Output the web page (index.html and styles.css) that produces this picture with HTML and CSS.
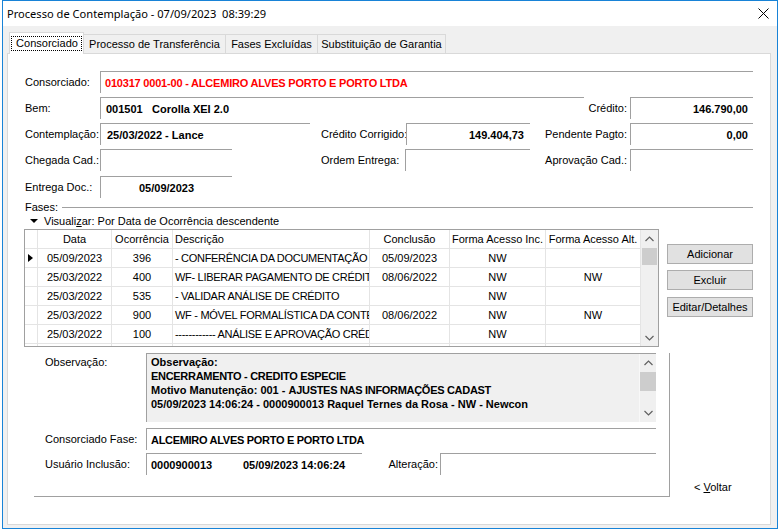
FILE: index.html
```html
<!DOCTYPE html>
<html lang="pt">
<head>
<meta charset="utf-8">
<title>Processo de Contemplação</title>
<link rel="stylesheet" href="styles.css">
</head>
<body>
<div class="window">
  <div class="titlebar">
    <span class="title">Processo de Contemplação - 07/09/2023&nbsp;&nbsp;08:39:29</span>
    <svg class="close" width="11" height="11" viewBox="0 0 11 11"><path d="M0.5 0.5 L10.5 10.5 M10.5 0.5 L0.5 10.5" stroke="#000" stroke-width="1" fill="none"/></svg>
  </div>
  <div class="client">
    <div class="tabs">
      <div class="tab active"><span class="focus">Consorciado</span></div>
      <div class="tab t2">Processo de Transferência</div>
      <div class="tab t3">Fases Excluídas</div>
      <div class="tab t4">Substituição de Garantia</div>
    </div>
    <div class="panel">
      <div class="row">
        <div class="lbl w75">Consorciado:</div>
        <div class="field red" style="width:653px">010317 0001-00 - ALCEMIRO ALVES PORTO E PORTO LTDA</div>
      </div>
      <div class="row">
        <div class="lbl w75">Bem:</div>
        <div class="field pl5" style="width:484px"><span class="code">001501</span><span>Corolla XEI 2.0</span></div>
        <div class="lbl rlbl" style="width:46px">Crédito:</div>
        <div class="field right" style="width:123px">146.790,00</div>
      </div>
      <div class="row">
        <div class="lbl w75">Contemplação:</div>
        <div class="field pl6" style="width:210px">25/03/2022 - Lance</div>
        <div class="lbl" style="width:85px;margin-left:11px">Crédito Corrigido:</div>
        <div class="field right pr7" style="width:124px">149.404,73</div>
        <div class="lbl rlbl" style="width:100px">Pendente Pagto:</div>
        <div class="field right" style="width:123px">0,00</div>
      </div>
      <div class="row tall">
        <div class="lbl w75">Chegada Cad.:</div>
        <div class="field" style="width:132px"></div>
        <div class="lbl" style="width:84px;margin-left:89px">Ordem Entrega:</div>
        <div class="field" style="width:125px"></div>
        <div class="lbl rlbl" style="width:100px">Aprovação Cad.:</div>
        <div class="field" style="width:123px"></div>
      </div>
      <div class="row last">
        <div class="lbl w75">Entrega Doc.:</div>
        <div class="field center" style="width:132px">05/09/2023</div>
      </div>

      <div class="fases"><span>Fases:</span><div class="fline"></div></div>
      <div class="visual"><span class="tri-down"></span><span>Visuali<u>z</u>ar: Por Data de Ocorrência descendente</span></div>

      <div class="gridrow">
        <div class="grid">
          <div class="gtable">
            <div class="grow head">
              <div class="gc c0"></div>
              <div class="gc c1">Data</div>
              <div class="gc c2">Ocorrência</div>
              <div class="gc c3 left">Descrição</div>
              <div class="gc c4">Conclusão</div>
              <div class="gc c5">Forma Acesso Inc.</div>
              <div class="gc c6">Forma Acesso Alt.</div>
            </div>
            <div class="grow">
              <div class="gc c0"><span class="tri-right"></span></div>
              <div class="gc c1">05/09/2023</div>
              <div class="gc c2">396</div>
              <div class="gc c3 left caps">- CONFERÊNCIA DA DOCUMENTAÇÃO</div>
              <div class="gc c4">05/09/2023</div>
              <div class="gc c5">NW</div>
              <div class="gc c6"></div>
            </div>
            <div class="grow">
              <div class="gc c0"></div>
              <div class="gc c1">25/03/2022</div>
              <div class="gc c2">400</div>
              <div class="gc c3 left caps">WF- LIBERAR PAGAMENTO DE CRÉDITO</div>
              <div class="gc c4">08/06/2022</div>
              <div class="gc c5">NW</div>
              <div class="gc c6">NW</div>
            </div>
            <div class="grow">
              <div class="gc c0"></div>
              <div class="gc c1">25/03/2022</div>
              <div class="gc c2">535</div>
              <div class="gc c3 left caps">- VALIDAR ANÁLISE DE CRÉDITO</div>
              <div class="gc c4"></div>
              <div class="gc c5">NW</div>
              <div class="gc c6"></div>
            </div>
            <div class="grow">
              <div class="gc c0"></div>
              <div class="gc c1">25/03/2022</div>
              <div class="gc c2">900</div>
              <div class="gc c3 left caps">WF - MÓVEL FORMALÍSTICA DA CONTEMPLAÇÃO</div>
              <div class="gc c4">08/06/2022</div>
              <div class="gc c5">NW</div>
              <div class="gc c6">NW</div>
            </div>
            <div class="grow">
              <div class="gc c0"></div>
              <div class="gc c1">25/03/2022</div>
              <div class="gc c2">100</div>
              <div class="gc c3 left caps">------------ ANÁLISE E APROVAÇÃO CRÉDITO</div>
              <div class="gc c4"></div>
              <div class="gc c5">NW</div>
              <div class="gc c6"></div>
            </div>
            <div class="grow">
              <div class="gc c0"></div>
              <div class="gc c1"></div>
              <div class="gc c2"></div>
              <div class="gc c3 left"></div>
              <div class="gc c4"></div>
              <div class="gc c5"></div>
              <div class="gc c6"></div>
            </div>
          </div>
          <div class="vscroll">
            <div class="sbtn"><svg width="9" height="6" viewBox="0 0 9 6"><path d="M0.5 5 L4.5 1 L8.5 5" stroke="#606060" stroke-width="1.2" fill="none"/></svg></div>
            <div class="thumb"></div>
            <div class="sfill"></div>
            <div class="sbtn"><svg width="9" height="6" viewBox="0 0 9 6"><path d="M0.5 1 L4.5 5 L8.5 1" stroke="#606060" stroke-width="1.2" fill="none"/></svg></div>
          </div>
        </div>
        <div class="buttons">
          <div class="btn">Adicionar</div>
          <div class="btn b2">Excluir</div>
          <div class="btn b3">Editar/Detalhes</div>
        </div>
      </div>

      <div class="lower">
        <div class="obsbox">
          <div class="orow">
            <div class="olbl top">Observação:</div>
            <div class="memo">
              <div class="memotext">
                <div>Observação:</div>
                <div class="caps">ENCERRAMENTO - CREDITO ESPECIE</div>
                <div>Motivo Manutenção: 001 - <span class="caps">AJUSTES NAS INFORMAÇÕES CADAST</span></div>
                <div>05/09/2023 14:06:24 - 0000900013 Raquel Ternes da Rosa - NW - Newcon</div>
              </div>
              <div class="mscroll">
                <div class="msbtn"><svg width="9" height="6" viewBox="0 0 9 6"><path d="M0.5 5 L4.5 1 L8.5 5" stroke="#606060" stroke-width="1.2" fill="none"/></svg></div>
                <div class="mthumb"></div>
                <div class="sfill"></div>
                <div class="msbtn"><svg width="9" height="6" viewBox="0 0 9 6"><path d="M0.5 1 L4.5 5 L8.5 1" stroke="#606060" stroke-width="1.2" fill="none"/></svg></div>
              </div>
            </div>
          </div>
          <div class="orow r2">
            <div class="olbl">Consorciado Fase:</div>
            <div class="field caps" style="width:510px">ALCEMIRO ALVES PORTO E PORTO LTDA</div>
          </div>
          <div class="orow r3">
            <div class="olbl">Usuário Inclusão:</div>
            <div class="field" style="width:216px"><span class="uid">0000900013</span><span>05/09/2023 14:06:24</span></div>
            <div class="lbl rlbl2" style="width:78px">Alteração:</div>
            <div class="field" style="width:216px"></div>
          </div>
        </div>
        <div class="voltar">&lt; <u>V</u>oltar</div>
      </div>
    </div>
  </div>
</div>
</body>
</html>
```
FILE: styles.css
```css
* { box-sizing: border-box; }
html, body { margin: 0; padding: 0; background: #fff; }
body {
  font-family: "Liberation Sans", Arial, sans-serif;
  font-size: 11px;
  color: #000;
}
.caps { letter-spacing: -0.3px; }
.window {
  margin-left: 2px;
  width: 776px;
  height: 529px;
  border: 1px solid #1883d7;
  display: flex;
  flex-direction: column;
  background: #f0f0f0;
}
.titlebar {
  height: 25px;
  flex: none;
  background: #fff;
  display: flex;
  align-items: center;
  padding-left: 4px;
}
.title {
  font-family: "Noto Sans", "Open Sans", sans-serif;
  font-size: 11.1px;
  color: #000;
}
.close { margin-left: auto; margin-right: 8px; }
.client {
  flex: 1;
  background: #f0f0f0;
  padding: 6px 0 0 4px;
}
.tabs {
  display: flex;
  align-items: flex-end;
  height: 21px;
  margin-left: 2px;
  position: relative;
  z-index: 1;
}
.tab {
  height: 19px;
  border-top: 1px solid #d9d9d9;
  border-right: 1px solid #d9d9d9;
  background: #f0f0f0;
  display: flex;
  align-items: center;
  justify-content: center;
  white-space: nowrap;
}
.tab.active {
  width: 75px;
  height: 22px;
  margin-bottom: -1px;
  background: #fff;
  border: 1px solid #d9d9d9;
  border-bottom: none;
  align-items: flex-start;
  padding-top: 3px;
}
.focus {
  border: 1px dotted #000;
  padding: 0 3px 0 4px;
  line-height: 13px;
  height: 15px;
}
.t2 { width: 142px; }
.t3 { width: 92px; }
.t4 { width: 128px; }
.panel {
  width: 764px;
  height: 472px;
  background: #fff;
  border: 1px solid #d9d9d9;
  padding: 17px 0 0 17px;
}
.row { display: flex; height: 26px; align-items: flex-start; }
.row.tall { height: 27px; }
.row.last { height: 24px; }
.lbl {
  height: 22px;
  display: flex;
  align-items: center;
  white-space: nowrap;
  flex: none;
}
.w75 { width: 75px; }
.rlbl { justify-content: flex-end; padding-right: 3px; }
.rlbl2 { justify-content: flex-end; padding-right: 2px; }
.field {
  flex: none;
  height: 22px;
  border-top: 1px solid #a0a0a0;
  border-left: 1px solid #a0a0a0;
  display: flex;
  align-items: center;
  padding-left: 4px;
  font-weight: bold;
  white-space: nowrap;
  overflow: hidden;
}
.field.red { color: #ff0000; letter-spacing: -0.2px; }
.field.right { justify-content: flex-end; padding-right: 5px; }
.field.pr7 { padding-right: 6px; }
.field.pl6 { padding-left: 6px; }
.field.pl5 { padding-left: 5px; }
.field.center { justify-content: center; padding-left: 0; }
.code { width: 46px; }
.uid { width: 92px; }
.fases {
  display: flex;
  align-items: center;
  height: 14px;
  width: 728px;
}
.fline { flex: 1; border-top: 1px solid #a0a0a0; margin-left: 4px; }
.visual {
  display: flex;
  align-items: center;
  height: 14px;
}
.tri-down {
  width: 0; height: 0;
  border-left: 4px solid transparent;
  border-right: 4px solid transparent;
  border-top: 4px solid #000;
  margin-left: 5px;
  margin-right: 6px;
}
.gridrow { display: flex; margin-top: 1px; margin-left: -1px; }
.grid {
  width: 635px;
  height: 118px;
  border: 1px solid #a0a0a0;
  display: flex;
  overflow: hidden;
  background: #fff;
  flex: none;
}
.gtable { width: 616px; flex: none; }
.grow { display: flex; height: 19px; border-bottom: 1px solid #e4e4e4; }
.gc {
  height: 100%;
  border-right: 1px solid #e4e4e4;
  display: flex;
  align-items: center;
  justify-content: center;
  overflow: hidden;
  white-space: nowrap;
  flex: none;
}
.gc.left { justify-content: flex-start; padding-left: 2px; }
.c0 { width: 13px; }
.c1 { width: 74px; }
.c2 { width: 61px; }
.c3 { width: 197px; }
.c4 { width: 80px; }
.c5 { width: 96px; }
.c6 { width: 95px; }
.tri-right {
  width: 0; height: 0;
  border-top: 4.5px solid transparent;
  border-bottom: 4.5px solid transparent;
  border-left: 5px solid #000;
  margin-left: -1px;
}
.vscroll {
  width: 17px;
  flex: none;
  background: #f0f0f0;
  display: flex;
  flex-direction: column;
}
.sbtn { height: 17px; display: flex; align-items: center; justify-content: center; flex: none; }
.thumb { height: 17px; margin: 1px 1px 0 1px; background: #cdcdcd; flex: none; }
.sfill { flex: 1; }
.buttons {
  margin-left: 8px;
  padding-top: 15px;
  display: flex;
  flex-direction: column;
}
.btn {
  width: 86px;
  height: 20px;
  background: #e1e1e1;
  border: 1px solid #adadad;
  display: flex;
  align-items: center;
  justify-content: center;
}
.b2 { margin-top: 6px; }
.b3 { margin-top: 7px; }
.lower { display: flex; margin-top: 6px; }
.obsbox {
  margin-left: 9px;
  width: 636px;
  height: 144px;
  border-right: 1px solid #a0a0a0;
  border-bottom: 1px solid #a0a0a0;
  padding-left: 11px;
  flex: none;
}
.orow { display: flex; align-items: flex-start; }
.r2 { margin-top: 6px; }
.r3 { margin-top: 3px; }
.olbl {
  width: 101px;
  height: 22px;
  display: flex;
  align-items: center;
  flex: none;
  white-space: nowrap;
}
.olbl.top { align-items: flex-start; padding-top: 3px; height: auto; }
.memo {
  width: 510px;
  height: 69px;
  background: #f0f0f0;
  border-top: 1px solid #a0a0a0;
  border-left: 1px solid #a0a0a0;
  display: flex;
  flex: none;
}
.memotext {
  flex: 1;
  padding: 1px 0 0 4px;
  font-weight: bold;
  line-height: 14px;
  white-space: nowrap;
  overflow: hidden;
}
.mscroll {
  width: 17px;
  flex: none;
  display: flex;
  flex-direction: column;
  border-left: 1px solid #f8f8f8;
}
.msbtn { height: 18px; display: flex; align-items: center; justify-content: center; flex: none; }
.mthumb { height: 19px; background: #cdcdcd; flex: none; }
.voltar {
  margin-left: 24px;
  align-self: flex-end;
  margin-bottom: 3px;
  line-height: 14px;
  white-space: nowrap;
}
```
